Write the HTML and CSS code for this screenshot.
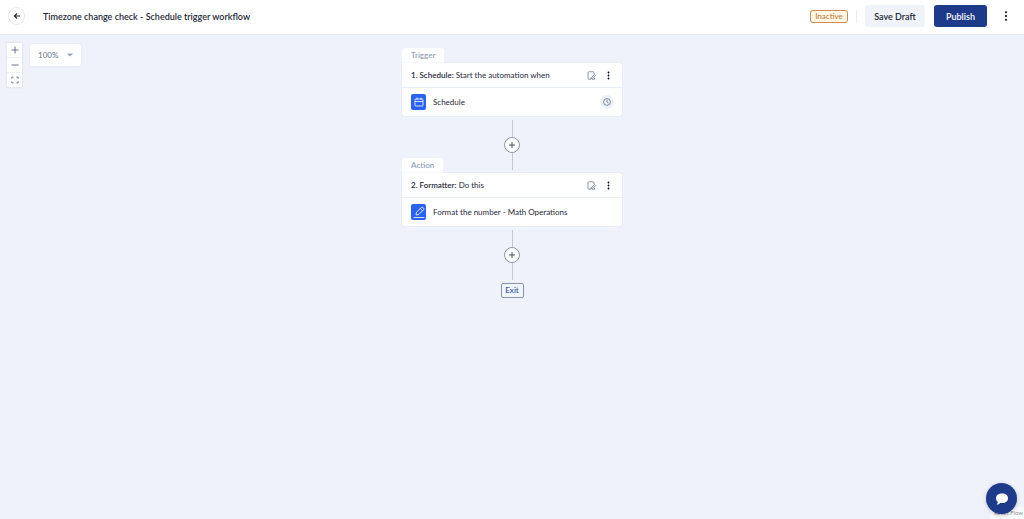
FILE: index.html
```html
<!DOCTYPE html>
<html lang="en">
<head>
  <meta charset="UTF-8">
  <title>Timezone change check - Schedule trigger workflow</title>
  <link rel="stylesheet" href="styles.css">
</head>
<body>
  <header class="topbar">
    <button class="back" aria-label="Back">
      <svg width="8" height="8" viewBox="0 0 16 16"><path d="M14 8H3M8 3L3 8l5 5" fill="none" stroke="currentColor" stroke-width="2.400"/></svg>
    </button>
    <h1>Timezone change check - Schedule trigger workflow</h1>
    <span class="status">Inactive</span>
    <span class="divider"></span>
    <button class="btn">Save Draft</button>
    <button class="btn btn-primary">Publish</button>
    <button class="more" aria-label="More options">
      <svg width="4" height="10" viewBox="0 0 4 10"><circle cx="2" cy="1.3" r="1"/><circle cx="2" cy="5" r="1"/><circle cx="2" cy="8.7" r="1"/></svg>
    </button>
  </header>

  <main class="canvas">
    <div class="tools">
      <div class="controls">
        <button aria-label="Zoom in"><svg width="8" height="8" viewBox="0 0 8 8"><path d="M4 .5v7M.5 4h7"/></svg></button>
        <button aria-label="Zoom out"><svg width="8" height="8" viewBox="0 0 8 8"><path d="M.5 4h7"/></svg></button>
        <button aria-label="Fit view"><svg width="8" height="8" viewBox="0 0 8 8"><path d="M.8 2.7V1.2h1.700M5.500 1.200h1.700v1.500M7.200 5.300v1.500H5.500M2.500 6.800H.8V5.300"/></svg></button>
      </div>
      <div class="zoom">
        <select aria-label="Zoom level">
          <option>100%</option>
        </select>
        <svg width="6" height="4" viewBox="0 0 6 4"><path d="M0 .5h6L3 3.500z"/></svg>
      </div>
    </div>

    <div class="flow">
      <section class="step">
        <div class="tab">Trigger</div>
        <div class="card">
          <div class="card-head">
            <p><b>1. Schedule:</b> Start the automation when</p>
            <button class="note" aria-label="Edit note">
              <svg width="9" height="9" viewBox="0 0 18 18"><path d="M14 6V3.500a2 2 0 0 0-2-2H4a2 2 0 0 0-2 2v11a2 2 0 0 0 2 2h3.500v-3M10 16.500h5v-3M9.500 12.500l5.500-5.500 2 2-5.500 5.500-3 .8z"/></svg>
            </button>
            <button class="more" aria-label="Step options">
              <svg width="3" height="9" viewBox="0 0 3 9"><circle cx="1.500" cy="1.500" r=".9"/><circle cx="1.500" cy="4.500" r=".9"/><circle cx="1.500" cy="7.500" r=".9"/></svg>
            </button>
          </div>
          <div class="card-body">
            <span class="app">
              <svg width="10" height="10" viewBox="0 0 20 20"><rect x="2" y="4" width="16" height="14" rx="1.500"/><path d="M2 9h16M6 1v5M14 1v5"/></svg>
            </span>
            <p>Schedule</p>
            <span class="clock">
              <svg width="8" height="8" viewBox="0 0 16 16"><circle cx="8" cy="8" r="6.800"/><path d="M8 3.500V8l3 2"/></svg>
            </span>
          </div>
        </div>
      </section>

      <div class="connector">
        <button aria-label="Add step"><svg width="6" height="6" viewBox="0 0 6 6"><path d="M3 0v6M0 3h6"/></svg></button>
      </div>

      <section class="step step-next">
        <div class="tab">Action</div>
        <div class="card">
          <div class="card-head">
            <p><b>2. Formatter:</b> Do this</p>
            <button class="note" aria-label="Edit note">
              <svg width="9" height="9" viewBox="0 0 18 18"><path d="M14 6V3.500a2 2 0 0 0-2-2H4a2 2 0 0 0-2 2v11a2 2 0 0 0 2 2h3.500v-3M10 16.500h5v-3M9.500 12.500l5.500-5.500 2 2-5.500 5.500-3 .8z"/></svg>
            </button>
            <button class="more" aria-label="Step options">
              <svg width="3" height="9" viewBox="0 0 3 9"><circle cx="1.500" cy="1.500" r=".9"/><circle cx="1.500" cy="4.500" r=".9"/><circle cx="1.500" cy="7.500" r=".9"/></svg>
            </button>
          </div>
          <div class="card-body">
            <span class="app">
              <svg width="14" height="14" viewBox="0 0 28 28"><path d="M8 20l1-5.500L18.500 5a2.500 2.500 0 0 1 3.500 0l1 1a2.500 2.500 0 0 1 0 3.500L13.500 19zM16.500 7l4.500 4.500M3 25h22"/></svg>
            </span>
            <p>Format the number - Math Operations</p>
          </div>
        </div>
      </section>

      <div class="connector">
        <button aria-label="Add step"><svg width="6" height="6" viewBox="0 0 6 6"><path d="M3 0v6M0 3h6"/></svg></button>
      </div>

      <div class="exit">Exit</div>
    </div>

    <a class="attribution" href="#">React Flow</a>
    <button class="chat" aria-label="Open chat">
      <svg width="14" height="12" viewBox="0 0 28 24"><path d="M14 1C6.500 1 2 5 2 10.500c0 3 1.300 5.500 3.500 7.200C6 20 4.500 22 3 23.500c3.500 0 6-1.500 7.500-3.900 1.200.3 2.300.4 3.500.4 7.500 0 12-4 12-9.500S21.500 1 14 1z"/></svg>
    </button>
  </main>
</body>
</html>
```

FILE: styles.css
```css
* {
  box-sizing: border-box;
}
body {
  display: flex;
  flex-direction: column;
  min-height: 100vh;
  margin: 0;
  font-family: Lato, sans-serif;
  font-size: 9px;
  color: #1f2937;
  background: #eff2fa;
}
h1, p {
  margin: 0;
}
button, select {
  padding: 0;
  border: 0;
  background: none;
  font: inherit;
  color: inherit;
  cursor: pointer;
}
svg {
  display: block;
}

/* top bar */
.topbar {
  display: flex;
  align-items: center;
  height: 35px;
  padding: 0 12px 2px 8px;
  background: #fff;
  border-bottom: 1px solid #e8ecf4;
}
.back {
  display: grid;
  place-items: center;
  width: 17px;
  height: 18px;
  border: 1px solid #e5e9f2;
  border-radius: 50%;
}
.topbar h1 {
  flex: 1;
  margin-left: 18px;
  font-size: 9px;
  font-weight: 600;
}
.status {
  width: 38px;
  border: 1px solid #d08a4e;
  border-radius: 3px;
  font-size: 8px;
  line-height: 11px;
  text-align: center;
  color: #c2712e;
  background: #fff8e6;
}
.divider {
  width: 1px;
  height: 13px;
  margin: 0 8px;
  background: #e8ecf4;
}
.btn {
  min-width: 60px;
  height: 22px;
  border-radius: 3px;
  font-weight: 600;
  background: #f0f3f9;
}
.btn-primary {
  min-width: 53px;
  margin: 0 12px 0 9px;
  color: #fff;
  background: #1e3a8a;
}
.more {
  display: grid;
  place-items: center;
  width: 13px;
  height: 16px;
}

/* canvas */
.canvas {
  position: relative;
  flex: 1;
  padding: 13px 0;
}
.tools {
  position: absolute;
  top: 8px;
  left: 7px;
  display: flex;
  align-items: flex-start;
  gap: 8px;
}
.controls {
  display: flex;
  flex-direction: column;
  gap: 1px;
  background: #eceff4;
  box-shadow: 0 0 2px 1px rgba(0, 0, 0, 0.05);
}
.controls button {
  display: grid;
  place-items: center;
  width: 15px;
  height: 14px;
  background: #fff;
}
.controls svg, .note svg, .clock svg {
  fill: none;
  stroke: #64748b;
}
.zoom {
  display: flex;
  align-items: center;
  height: 22px;
  margin-top: 1px;
  padding-right: 8px;
  border-radius: 3px;
  color: #64748b;
  background: #fff;
  box-shadow: 0 0 2px rgba(0, 0, 0, 0.08);
}
.zoom select {
  appearance: none;
  width: 37px;
  height: 22px;
  padding-left: 8px;
  font-size: 8px;
}
.zoom svg {
  fill: #94a3b8;
}
.flow {
  display: flex;
  flex-direction: column;
  align-items: center;
}
.step {
  width: 220px;
}
.step-next {
  margin-top: -12px;
}
.tab {
  width: fit-content;
  height: 15px;
  padding: 0 9px;
  border-radius: 3px 3px 0 0;
  font-size: 8px;
  font-weight: 600;
  line-height: 15px;
  color: #94a3b8;
  background: #fff;
}
.card {
  border-radius: 0 2px 2px 2px;
  background: #fff;
  box-shadow: 0 0 1px rgba(30, 58, 138, 0.25);
}
.card-head, .card-body {
  display: flex;
  align-items: center;
  padding: 0 8px 0 9px;
  font-size: 8px;
}
.card-head {
  height: 25px;
  padding-right: 7px;
  border-bottom: 1px solid #e8ecf4;
}
.card p {
  flex: 1;
}
.card b {
  font-weight: 600;
}
.note {
  margin-right: 6px;
}
.note svg {
  stroke-width: 1.5;
}
.card-body {
  gap: 7px;
  height: 28px;
}
.app {
  display: grid;
  place-items: center;
  width: 15px;
  height: 16px;
  border-radius: 2px;
  background: #2b62f6;
}
.app svg {
  fill: none;
  stroke: #fff;
  stroke-width: 1.6;
}
.clock {
  display: grid;
  place-items: center;
  width: 14px;
  height: 14px;
  border-radius: 50%;
  background: #eef2f8;
}
.clock svg {
  stroke-width: 1.6;
}
.connector {
  display: flex;
  flex-direction: column;
  align-items: center;
  margin-top: 4px;
}
.connector::before, .connector::after {
  content: "";
  width: 1px;
  height: 17px;
  background: #c3c8d2;
}
.connector button {
  display: grid;
  place-items: center;
  width: 16px;
  height: 16px;
  border: 1px solid #8f98a8;
  border-radius: 50%;
  background: #fff;
}
.connector svg {
  stroke: #475569;
  stroke-width: 1;
}
.exit {
  width: 23px;
  margin-top: 3px;
  border: 1px solid #8795ab;
  border-radius: 2px;
  font-size: 8px;
  font-weight: 600;
  line-height: 13px;
  text-align: center;
  color: #3b5aa9;
  background: #f1f5fd;
}

/* floating corner items */
.attribution {
  position: absolute;
  right: 0;
  bottom: 0;
  padding: 2px 1px 2px 4px;
  font-size: 6px;
  line-height: 8px;
  color: #999;
  text-decoration: none;
  background: rgba(255, 255, 255, 0.5);
}
.chat {
  position: absolute;
  right: 7px;
  bottom: 5px;
  display: grid;
  place-items: center;
  width: 31px;
  height: 31px;
  border-radius: 50%;
  background: #1e3a8a;
  box-shadow: 0 1px 4px rgba(0, 0, 0, 0.2);
}
.chat svg {
  fill: #fff;
}
```
